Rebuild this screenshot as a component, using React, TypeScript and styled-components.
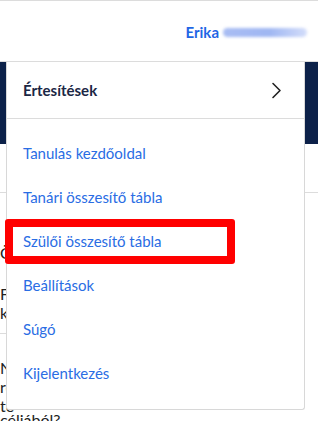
import styled, { createGlobalStyle } from "styled-components";

const GlobalStyle = createGlobalStyle`
  html, body {
    margin: 0;
    padding: 0;
    background: #ffffff;
    font-family: Lato, "Open Sans", Arial, sans-serif;
    overflow: hidden;
  }
`;

const Page = styled.div`
  position: relative;
  width: 318px;
  height: 421px;
  overflow: hidden;
  background: #ffffff;
`;

const TopBar = styled.header`
  height: 60px;
  border-top: 1px solid #dcdcdc;
  border-bottom: 1px solid #dcdcdc;
  display: flex;
  align-items: center;
  justify-content: flex-end;
  padding-right: 11px;
`;

const UserName = styled.div`
  display: flex;
  align-items: center;
  gap: 4px;
  font-size: 15px;
  font-weight: 700;
  color: #1f66e5;
  margin-top: 2px;
`;

const Blurred = styled.span`
  display: inline-block;
  width: 84px;
  height: 9px;
  border-radius: 5px;
  background: linear-gradient(90deg, #a9bdf3 0%, #9fb6f2 55%, #d3ddfa 100%);
  filter: blur(1.5px);
`;

const Banner = styled.div`
  height: 82px;
  background: #0c2149;
`;

const Section = styled.div`
  height: 48px;
  border-bottom: 1px solid #dcdcdc;
`;

const Card = styled.div`
  padding-top: 50px;
  font-size: 16px;
  color: #222;
  line-height: 19px;
`;

const CardLine = styled.p<{ $gap?: number }>`
  margin: ${(p) => p.$gap ?? 0}px 0 0 0;
  white-space: nowrap;
`;

const Divider = styled.div`
  width: 200px;
  border-bottom: 1px solid #dcdcdc;
  margin: 11px 0 24px 0;
`;

const Menu = styled.nav`
  position: absolute;
  top: 62px;
  left: 6px;
  width: 297px;
  height: 347px;
  background: #ffffff;
  border: 1px solid #d8d8d8;
  border-top: none;
  border-radius: 0 0 3px 3px;
  display: flex;
  flex-direction: column;
`;

const MenuHeader = styled.div`
  height: 56px;
  border-bottom: 1px solid #dcdcdc;
  display: flex;
  align-items: center;
  justify-content: space-between;
  padding: 0 22px 0 16px;
`;

const MenuTitle = styled.span`
  font-size: 15px;
  font-weight: 700;
  color: #1b2745;
`;

const MenuList = styled.ul`
  list-style: none;
  margin: 0;
  padding: 12px 0 0 0;
`;

const MenuItem = styled.li`
  position: relative;
  height: 44px;
  display: flex;
  align-items: center;
  padding-left: 16px;
  font-size: 15px;
  color: #2a6de4;
`;

const Highlight = styled.span`
  position: absolute;
  left: -2px;
  top: 0;
  width: 214px;
  height: 29px;
  border: 8px solid #ff0000;
  border-radius: 3px;
`;

const items = [
  "Tanulás kezdőoldal",
  "Tanári összesítő tábla",
  "Szülői összesítő tábla",
  "Beállítások",
  "Súgó",
  "Kijelentkezés",
];

function Chevron() {
  return (
    <svg width="11" height="17" viewBox="0 0 11 17">
      <path
        d="M2 1.5 L9 8.5 L2 15.5"
        fill="none"
        stroke="#222"
        strokeWidth="1.6"
        strokeLinecap="round"
        strokeLinejoin="round"
      />
    </svg>
  );
}

export default function App() {
  return (
    <>
      <GlobalStyle />
      <Page>
        <TopBar>
          <UserName>
            Erika <Blurred />
          </UserName>
        </TopBar>
        <Banner />
        <Section />
        <Card>
          <CardLine>Ön</CardLine>
          <CardLine $gap={22}>F</CardLine>
          <CardLine>k</CardLine>
          <Divider />
          <CardLine>N</CardLine>
          <CardLine>re</CardLine>
          <CardLine>te</CardLine>
          <CardLine $gap={-5}>céliából?</CardLine>
        </Card>
        <Menu>
          <MenuHeader>
            <MenuTitle>Értesítések</MenuTitle>
            <Chevron />
          </MenuHeader>
          <MenuList>
            {items.map((label, i) => (
              <MenuItem key={label}>
                {i === 2 && <Highlight />}
                {label}
              </MenuItem>
            ))}
          </MenuList>
        </Menu>
      </Page>
    </>
  );
}
